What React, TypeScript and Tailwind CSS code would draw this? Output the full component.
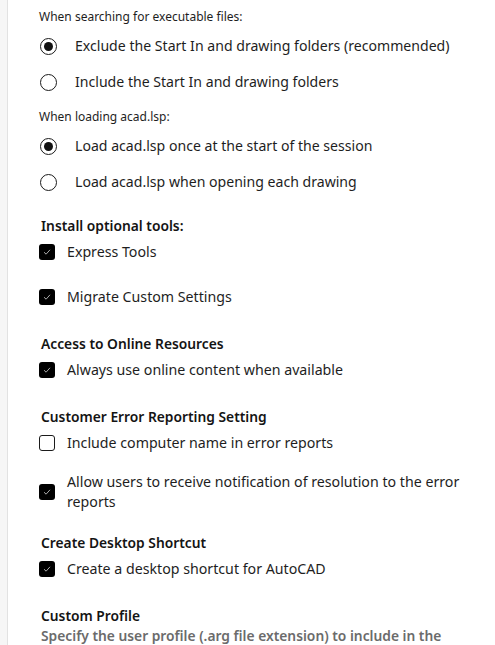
import type { ReactNode } from "react";

function Radio({ checked, children }: { checked?: boolean; children: ReactNode }) {
    return (
        <div className="flex h-[36px] items-center">
            <span className="ml-[1px] flex h-[17px] w-[17px] items-center justify-center rounded-full border-[1.5px] border-[#1b1b1b] bg-white">
                {checked && <span className="h-[9px] w-[9px] rounded-full bg-[#111]" />}
            </span>
            <span className="ml-[18px] text-[14.1px] text-[#1e1e1e]">{children}</span>
        </div>
    );
}

function Check({ checked, children }: { checked?: boolean; children: ReactNode }) {
    return (
        <div className="flex items-center">
            {checked ? (
                <span className="flex h-[16px] w-[16px] shrink-0 items-center justify-center rounded-[3px] bg-black">
                    <svg width="10" height="10" viewBox="0 0 10 10" fill="none">
                        <path d="M2 5.2 L4.1 7.2 L8 2.8" stroke="#bdbdbd" strokeWidth="0.9" />
                    </svg>
                </span>
            ) : (
                <span className="h-[16px] w-[16px] shrink-0 rounded-[3px] border-[1.5px] border-[#1b1b1b] bg-white" />
            )}
            <span className="ml-[12px] text-[14.2px] leading-[20px] text-[#1e1e1e]">{children}</span>
        </div>
    );
}

function Heading({ children }: { children: ReactNode }) {
    return <div className="ml-[2px] h-[20px] text-[13.8px] font-semibold leading-[20px] text-[#141414]">{children}</div>;
}

export default function App() {
    return (
        <div className="flex min-h-[645px] w-[495px] bg-white font-['Noto_Sans',sans-serif]">
            <div className="w-[8px] shrink-0 border-r border-[#e2e2e2] bg-[#f6f6f6]" />
            <div className="flex-1 pl-[31px] pr-[20px] pt-[7px]">
                <div className="h-[20px] text-[12px] leading-[20px] text-[#1e1e1e]">When searching for executable files:</div>
                <div className="mt-[1px]">
                    <Radio checked>Exclude the Start In and drawing folders (recommended)</Radio>
                    <Radio>Include the Start In and drawing folders</Radio>
                </div>
                <div className="mt-[7px] h-[20px] text-[12px] leading-[20px] text-[#1e1e1e]">When loading acad.lsp:</div>
                <div className="mt-[1px]">
                    <Radio checked>Load acad.lsp once at the start of the session</Radio>
                    <Radio>Load acad.lsp when opening each drawing</Radio>
                </div>

                <div className="mt-[16px]">
                    <Heading>Install optional tools:</Heading>
                    <div className="mt-[4px] h-[24px] flex items-center">
                        <Check checked>Express Tools</Check>
                    </div>
                    <div className="mt-[21px] h-[24px] flex items-center">
                        <Check checked>Migrate Custom Settings</Check>
                    </div>
                </div>

                <div className="mt-[25px]">
                    <Heading>Access to Online Resources</Heading>
                    <div className="mt-[4px] h-[24px] flex items-center">
                        <Check checked>Always use online content when available</Check>
                    </div>
                </div>

                <div className="mt-[25px]">
                    <Heading>Customer Error Reporting Setting</Heading>
                    <div className="mt-[4px] h-[24px] flex items-center">
                        <Check>Include computer name in error reports</Check>
                    </div>
                    <div className="mt-[17px] flex items-center">
                        <Check checked>Allow users to receive notification of resolution to the error reports</Check>
                    </div>
                </div>

                <div className="mt-[21px]">
                    <Heading>Create Desktop Shortcut</Heading>
                    <div className="mt-[4px] h-[24px] flex items-center">
                        <Check checked>Create a desktop shortcut for AutoCAD</Check>
                    </div>
                </div>

                <div className="mt-[25px]">
                    <Heading>Custom Profile</Heading>
                    <div className="ml-[2px] text-[13.8px] font-semibold leading-[20px] text-[#6b6b6b]">
                        Specify the user profile (.arg file extension) to include in the
                    </div>
                </div>
            </div>
        </div>
    );
}
